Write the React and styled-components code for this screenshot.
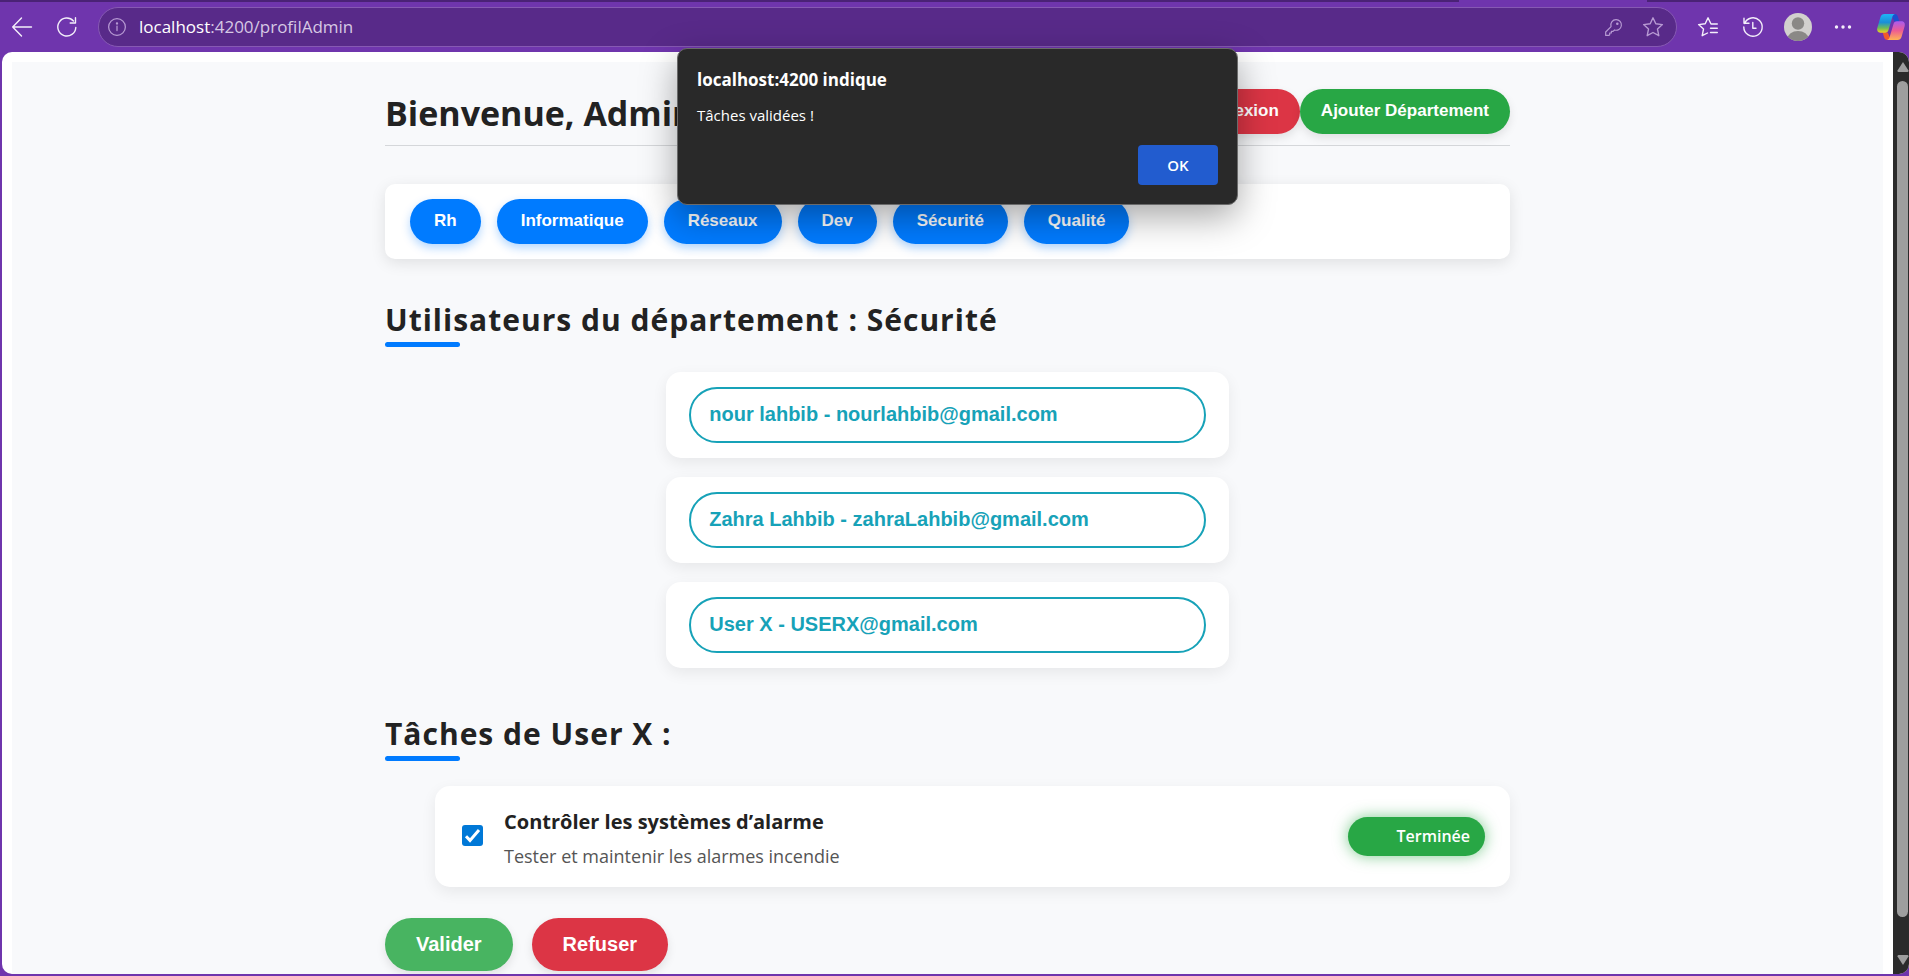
import React from "react";
import styled, { createGlobalStyle } from "styled-components";

const uiFont = `"Segoe UI", "Open Sans", "Noto Sans", sans-serif`;
const buttonFont = `Arial, "Liberation Sans", sans-serif`;

const GlobalStyle = createGlobalStyle`
  *, *::before, *::after { box-sizing: border-box; }
  body { margin: 0; background: #6f35ad; font-family: ${uiFont}; color: #222; }
  button, input { font: inherit; }
`;

const Browser = styled.div`
  position: relative;
  display: flex;
  flex-direction: column;
  height: 100vh;
  overflow: hidden;
  background: #6f35ad;
`;

const TabEdge = styled.div`
  display: flex;
  justify-content: flex-end;
  height: 2px;
  background: #4a2276;
`;

const ActiveTab = styled.div`
  width: 188px;
  margin-right: 262px;
  background: #6f35ad;
`;

const Toolbar = styled.header`
  display: flex;
  flex: none;
  align-items: center;
  gap: 17px;
  height: 50px;
  padding: 0 1px 0 8px;
`;

const IconButton = styled.button`
  display: grid;
  place-items: center;
  flex: none;
  width: ${(p) => (p.$wide ? 34 : 28)}px;
  height: 28px;
  padding: 0;
  border: 0;
  background: none;
  color: ${(p) => (p.$dim ? "#b79ad3" : "#f4effa")};
  svg { display: block; overflow: visible; }
`;

const AddressBar = styled.div`
  display: flex;
  flex: 1;
  align-items: center;
  gap: 12px;
  height: 40px;
  padding: 0 9px 0 4px;
  border: 1px solid #8659b3;
  border-radius: 20px;
  background: #582a89;
`;

const Url = styled.div`
  flex: 1;
  margin-left: -4px;
  font-size: 17px;
  line-height: 24px;
  color: #d6c8e4;
  strong { font-weight: 400; color: #fff; }
`;

const ToolbarIcons = styled.div`
  display: flex;
  align-items: center;
  gap: 17px;
`;

const Viewport = styled.div`
  display: flex;
  flex: 1;
  min-height: 0;
  margin: 0 0 2px 2px;
  overflow: hidden;
  border-radius: 10px;
  background: #fff;
`;

const Page = styled.main`
  flex: 1;
  margin: 10px 10px 0;
  overflow: hidden;
  background: #f8f9fb;
`;

const Container = styled.div`
  max-width: 1125px;
  margin: 0 auto;
  padding-top: 27px;
`;

const PageHeader = styled.div`
  display: flex;
  justify-content: space-between;
  height: 57px;
  border-bottom: 1px solid #d5d7da;
`;

const Title = styled.h1`
  margin: 0;
  font-size: 34px;
  line-height: 48px;
  font-weight: 700;
`;

const HeaderActions = styled.div`
  display: flex;
`;

const PillButton = styled.button`
  height: 45px;
  padding: 0 ${(p) => p.$pad}px 2px;
  border: 0;
  border-radius: 25px;
  background: ${(p) => p.$bg};
  box-shadow: 0 4px 10px ${(p) => p.$shadow || "rgba(0, 0, 0, 0.1)"};
  color: #fff;
  font-family: ${buttonFont};
  font-size: 17px;
  line-height: 20px;
  font-weight: 700;
`;

const DepartmentNav = styled.nav`
  display: flex;
  gap: 16px;
  margin-top: 38px;
  padding: 15px 25px;
  border-radius: 10px;
  background: #fff;
  box-shadow: 0 4px 15px rgba(0, 0, 0, 0.1);
`;

const SectionTitle = styled.h2`
  margin: 40px 0 25px;
  font-size: 30px;
  line-height: 41px;
  font-weight: 700;
  letter-spacing: 1px;
  &::after {
    content: "";
    display: block;
    width: 75px;
    height: 5px;
    margin-top: 2px;
    border-radius: 3px;
    background: #007bff;
  }
`;

const UserList = styled.ul`
  display: flex;
  flex-direction: column;
  gap: 19px;
  width: 50%;
  margin: 0 auto 45px;
  padding: 0;
  list-style: none;
`;

const UserCard = styled.li`
  padding: 15px 23px;
  border-radius: 15px;
  background: #fff;
  box-shadow: 0 5px 15px rgba(0, 0, 0, 0.07);
`;

const UserButton = styled.button`
  display: block;
  width: 100%;
  height: 56px;
  padding: 0 18px 2px;
  border: 2px solid #17a2b8;
  border-radius: 28px;
  background: #fff;
  color: #17a2b8;
  font-family: ${buttonFont};
  font-size: 20px;
  font-weight: 700;
  text-align: left;
`;

const TaskList = styled.ul`
  margin: 0;
  padding: 0 0 0 50px;
  list-style: none;
`;

const TaskCard = styled.li`
  display: flex;
  align-items: center;
  height: 101px;
  padding: 0 25px 0 27px;
  border-radius: 15px;
  background: #fff;
  box-shadow: 0 5px 15px rgba(0, 0, 0, 0.07);
`;

const TaskCheck = styled.input`
  appearance: none;
  flex: none;
  width: 21px;
  height: 21px;
  margin: 0 21px 2px 0;
  border-radius: 3px;
  background: #0078d7 url("data:image/svg+xml,%3Csvg xmlns='http://www.w3.org/2000/svg' viewBox='0 0 21 21'%3E%3Cpath d='M4 11.2l4 4.2L17 5' fill='none' stroke='white' stroke-width='3'/%3E%3C/svg%3E") center / 21px 21px;
`;

const TaskText = styled.label`
  flex: 1;
  padding-top: 4px;
  font-size: 18px;
  line-height: 30px;
  color: #555;
  strong {
    display: block;
    padding-bottom: 4px;
    color: #222;
    font-size: 20px;
    font-weight: 700;
  }
`;

const Status = styled.span`
  min-width: 137px;
  padding: 0 15px;
  border-radius: 20px;
  background: #28a745;
  box-shadow: 0 0 15px rgba(40, 167, 69, 0.6);
  color: #fff;
  font-size: 16px;
  line-height: 39px;
  font-weight: 600;
  text-align: right;
`;

const Decisions = styled.div`
  display: flex;
  gap: 19px;
  margin-top: 31px;
`;

const DecisionButton = styled(PillButton)`
  height: 53px;
  border-radius: 27px;
  font-size: 20px;
`;

const Scrollbar = styled.div`
  display: flex;
  flex-direction: column;
  align-items: center;
  justify-content: space-between;
  width: 16px;
  padding: 10px 1px 9px 4px;
  background: #2b2b2b;
  svg { display: block; flex: none; }
`;

const Thumb = styled.div`
  flex: 1;
  width: 11px;
  margin: 9px 0 38px;
  border-radius: 6px;
  background: #9e9e9e;
`;

const Dialog = styled.section`
  position: absolute;
  top: 48px;
  left: 6px;
  right: 0;
  width: 561px;
  height: 157px;
  margin: 0 auto;
  display: flex;
  flex-direction: column;
  padding: 18px 19px 19px;
  border: 1px solid #6a6a6a;
  border-radius: 10px;
  background: #292929;
  box-shadow: 0 12px 36px rgba(0, 0, 0, 0.35);
  color: #fff;
`;

const DialogTitle = styled.h2`
  margin: 0;
  font-size: 17px;
  line-height: 26px;
  font-weight: 700;
`;

const DialogMessage = styled.p`
  margin: 10px 0 0;
  font-size: 15px;
  line-height: 24px;
`;

const OkButton = styled.button`
  align-self: flex-end;
  width: 80px;
  height: 40px;
  margin-top: auto;
  border: 0;
  border-radius: 4px;
  background: #225ccf;
  color: #fff;
  font-size: 15px;
  font-weight: 600;
`;

const Svg = ({ size = 20, children, width = 1.4 }) => (
  <svg width={size} height={size} viewBox="0 0 20 20" fill="none" stroke="currentColor"
    strokeWidth={width} strokeLinecap="round" strokeLinejoin="round" aria-hidden="true">
    {children}
  </svg>
);

const BackIcon = () => <Svg><path d="M19.500 10H.7M9.500 1L.7 10l8.800 9" /></Svg>;
const ReloadIcon = () => <Svg><path d="M18.800 10.500A9 9 0 1 1 16.500 4M18.500.8V6h-5.300" /></Svg>;
const InfoIcon = () => <Svg size={18}><circle cx="10" cy="10" r="9.300" /><path d="M10 9v5" /><circle cx="10" cy="6" r=".6" fill="currentColor" /></Svg>;
const KeyIcon = () => <Svg size={17}><path d="M13 .8a6.200 6.200 0 1 1-1.800 12.100L9.500 14.500H7.500v2H5.500v2l-.8.800H.8v-4L7.100 8.900A6.200 6.200 0 0 1 13 .8z" /><circle cx="14.500" cy="5.500" r=".8" fill="currentColor" /></Svg>;
const StarIcon = () => <Svg><path d="M10 .8l2.800 6 6.600.8-4.900 4.500 1.300 6.600L10 15.500l-5.800 3.200 1.300-6.600L.6 7.600l6.600-.8z" /></Svg>;
const FavoritesIcon = () => <Svg><path d="M19.300 7H13L10 .8l-2.800 6-6.600.8 4.900 4.500-1.300 6.600L9.500 16M12.500 11.300h6.800M12.500 15.500h6.800" /></Svg>;
const HistoryIcon = () => <Svg><path d="M1.500 6.500A9.200 9.200 0 1 1 .8 10M1 1.300v5h5M9.800 5.500v5.800H13" /></Svg>;
const MoreIcon = () => <svg width="18" height="18" viewBox="0 0 18 18" fill="currentColor" aria-hidden="true"><circle cx="2.500" cy="9" r="1.700" /><circle cx="9" cy="9" r="1.700" /><circle cx="15.500" cy="9" r="1.700" /></svg>;

const AvatarIcon = () => (
  <svg width="28" height="28" viewBox="0 0 28 28" aria-hidden="true">
    <defs><clipPath id="avatar"><circle cx="14" cy="14" r="14" /></clipPath></defs>
    <g clipPath="url(#avatar)">
      <rect width="28" height="28" fill="#d2d0ce" />
      <circle cx="14" cy="10.500" r="6.200" fill="#8a8886" />
      <ellipse cx="14" cy="26" rx="10.500" ry="8" fill="#8a8886" />
    </g>
  </svg>
);

const CopilotIcon = () => (
  <svg width="28" height="26" viewBox="0 0 28 26" aria-hidden="true">
    <defs>
      <linearGradient id="cool" x1="0" y1="0" x2="0" y2="1"><stop stopColor="#1fb6f5" /><stop offset=".45" stopColor="#1a8fd8" /><stop offset=".75" stopColor="#6dbb5a" /><stop offset="1" stopColor="#f2d21f" /></linearGradient>
      <linearGradient id="warm" x1="0" y1="0" x2="0" y2="1"><stop stopColor="#a95bf0" /><stop offset=".5" stopColor="#ee5c92" /><stop offset="1" stopColor="#ffb454" /></linearGradient>
    </defs>
    <path d="M14 0h3.500c2 0 3 1.200 3.500 3l1.300 4.500h-5z" fill="#1c4fd0" />
    <path d="M14 26h-3.500c-2 0-3-1.200-3.500-3l-1.300-4.500h5z" fill="#f0592b" />
    <path d="M7.500 0H18c-1.700.4-2.300 1.800-2.800 3.500L11.500 16c-.6 1.800-1.500 2.700-3.500 2.700H3.500C.8 18.700-.3 16.500.3 14L3.500 3C4.200 1 5.300 0 7.500 0z" fill="url(#cool)" />
    <path d="M20.500 26H10c1.700-.4 2.300-1.800 2.800-3.500L16.500 10c.6-1.800 1.500-2.700 3.500-2.700h4.500c2.700 0 3.800 2.200 3.200 4.700L24.500 23c-.7 2-1.800 3-4 3z" fill="url(#warm)" />
  </svg>
);

const departments = ["Rh", "Informatique", "Réseaux", "Dev", "Sécurité", "Qualité"];
const users = [
  "nour lahbib - nourlahbib@gmail.com",
  "Zahra Lahbib - zahraLahbib@gmail.com",
  "User X - USERX@gmail.com",
];

export default function App() {
  return (
    <Browser>
      <GlobalStyle />
      <TabEdge><ActiveTab /></TabEdge>
      <Toolbar>
        <IconButton aria-label="Retour"><BackIcon /></IconButton>
        <IconButton aria-label="Actualiser"><ReloadIcon /></IconButton>
        <AddressBar>
          <IconButton $dim aria-label="Informations du site"><InfoIcon /></IconButton>
          <Url><strong>localhost</strong>:4200/profilAdmin</Url>
          <IconButton $dim aria-label="Mots de passe"><KeyIcon /></IconButton>
          <IconButton $dim aria-label="Ajouter aux favoris"><StarIcon /></IconButton>
        </AddressBar>
        <ToolbarIcons>
          <IconButton aria-label="Favoris"><FavoritesIcon /></IconButton>
          <IconButton aria-label="Historique"><HistoryIcon /></IconButton>
          <IconButton aria-label="Profil"><AvatarIcon /></IconButton>
          <IconButton aria-label="Plus"><MoreIcon /></IconButton>
          <IconButton $wide aria-label="Copilot"><CopilotIcon /></IconButton>
        </ToolbarIcons>
      </Toolbar>

      <Viewport>
        <Page>
          <Container>
            <PageHeader>
              <Title>Bienvenue, Admin</Title>
              <HeaderActions>
                <PillButton $bg="#dc3545" $pad={21}>Déconnexion</PillButton>
                <PillButton $bg="#28a745" $pad={21}>Ajouter Département</PillButton>
              </HeaderActions>
            </PageHeader>

            <DepartmentNav>
              {departments.map((name) => (
                <PillButton key={name} $bg="#007bff" $pad={24} $shadow="rgba(0, 123, 255, 0.3)">{name}</PillButton>
              ))}
            </DepartmentNav>

            <SectionTitle>Utilisateurs du département : Sécurité</SectionTitle>
            <UserList>
              {users.map((user) => (
                <UserCard key={user}><UserButton>{user}</UserButton></UserCard>
              ))}
            </UserList>

            <SectionTitle>Tâches de User X :</SectionTitle>
            <TaskList>
              <TaskCard>
                <TaskCheck type="checkbox" id="task-alarm" defaultChecked />
                <TaskText htmlFor="task-alarm">
                  <strong>Contrôler les systèmes d’alarme</strong>
                  Tester et maintenir les alarmes incendie
                </TaskText>
                <Status>Terminée</Status>
              </TaskCard>
            </TaskList>

            <Decisions>
              <DecisionButton $bg="#48b461" $pad={31}>Valider</DecisionButton>
              <DecisionButton $bg="#dc3545" $pad={31}>Refuser</DecisionButton>
            </Decisions>
          </Container>
        </Page>
        <Scrollbar aria-hidden="true">
          <svg width="12" height="10" viewBox="0 0 12 10"><path d="M6 0l5.500 8.500q.3 1.500-1 1.500h-9q-1.300 0-1-1.500z" fill="#9e9e9e" /></svg>
          <Thumb />
          <svg width="12" height="10" viewBox="0 0 12 10"><path d="M6 10L.5 1.500Q.2 0 1.500 0h9q1.300 0 1 1.500z" fill="#9e9e9e" /></svg>
        </Scrollbar>
      </Viewport>

      <Dialog role="alertdialog" aria-labelledby="alert-title">
        <DialogTitle id="alert-title">localhost:4200 indique</DialogTitle>
        <DialogMessage>Tâches validées !</DialogMessage>
        <OkButton>OK</OkButton>
      </Dialog>
    </Browser>
  );
}
